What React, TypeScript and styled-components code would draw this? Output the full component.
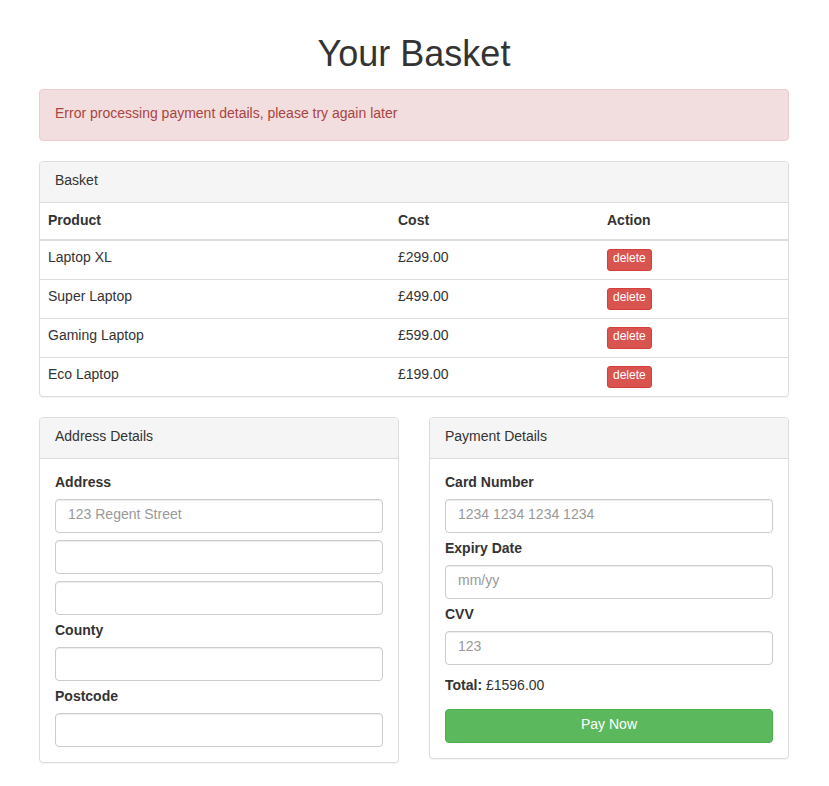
import React from "react";
import styled, { createGlobalStyle } from "styled-components";

const GlobalStyle = createGlobalStyle`
  * { box-sizing: border-box; }
  body {
    margin: 0;
    background: #fff;
    font-family: "Liberation Sans", Helvetica, Arial, sans-serif;
    font-size: 14px;
    line-height: 20px;
    color: #333;
  }
`;

type Item = { name: string; cost: string };

const items: Item[] = [
  { name: "Laptop XL", cost: "£299.00" },
  { name: "Super Laptop", cost: "£499.00" },
  { name: "Gaming Laptop", cost: "£599.00" },
  { name: "Eco Laptop", cost: "£199.00" },
];

const App: React.FC = () => {
  return (
    <>
      <GlobalStyle />
      <Page>
        <Container>
          <Title>Your Basket</Title>
          <Alert>Error processing payment details, please try again later</Alert>

          <Panel>
            <PanelHeading>Basket</PanelHeading>
            <Table>
              <thead>
                <tr>
                  <Th $width={350}>Product</Th>
                  <Th $width={209}>Cost</Th>
                  <Th>Action</Th>
                </tr>
              </thead>
              <tbody>
                {items.map((item) => (
                  <tr key={item.name}>
                    <Td>{item.name}</Td>
                    <Td>{item.cost}</Td>
                    <Td>
                      <DeleteButton>delete</DeleteButton>
                    </Td>
                  </tr>
                ))}
              </tbody>
            </Table>
          </Panel>

          <Columns>
            <Panel>
              <PanelHeading>Address Details</PanelHeading>
              <PanelBody>
                <Label>Address</Label>
                <Input placeholder="123 Regent Street" />
                <Input />
                <Input />
                <Label>County</Label>
                <Input />
                <Label>Postcode</Label>
                <Input $last />
              </PanelBody>
            </Panel>

            <Panel>
              <PanelHeading>Payment Details</PanelHeading>
              <PanelBody>
                <Label>Card Number</Label>
                <Input placeholder="1234 1234 1234 1234" />
                <Label>Expiry Date</Label>
                <Input placeholder="mm/yy" />
                <Label>CVV</Label>
                <Input placeholder="123" />
                <Total>
                  <strong>Total:</strong> £1596.00
                </Total>
                <PayButton>Pay Now</PayButton>
              </PanelBody>
            </Panel>
          </Columns>
        </Container>
      </Page>
    </>
  );
};

const Page = styled.div`
  display: flex;
  justify-content: center;
`;

const Container = styled.div`
  width: 751px;
  padding-right: 1px;
  padding-bottom: 20px;
`;

const Title = styled.h1`
  margin: 34px 0 15px;
  font-size: 36px;
  line-height: 39.6px;
  font-weight: 400;
  text-align: center;
  color: #333;
`;

const Alert = styled.div`
  padding: 13px 15px 17px;
  margin-bottom: 20px;
  border: 1px solid #ebccd1;
  border-radius: 4px;
  background: #f2dede;
  color: #a94442;
`;

const Panel = styled.div`
  margin-bottom: 20px;
  border: 1px solid #ddd;
  border-radius: 4px;
  background: #fff;
  box-shadow: 0 1px 1px rgba(0, 0, 0, 0.05);
  overflow: hidden;
`;

const PanelHeading = styled.div`
  padding: 8px 15px 12px;
  background: #f5f5f5;
  border-bottom: 1px solid #ddd;
  color: #333;
`;

const PanelBody = styled.div`
  padding: 15px;
  display: flex;
  flex-direction: column;
`;

const Table = styled.table`
  width: 100%;
  border-collapse: collapse;
  border-spacing: 0;
`;

const Th = styled.th<{ $width?: number }>`
  width: ${(p) => (p.$width ? `${p.$width}px` : "auto")};
  padding: 7px 8px 9px;
  line-height: 20px;
  text-align: left;
  font-weight: bold;
  vertical-align: bottom;
  border-bottom: 2px solid #ddd;
`;

const Td = styled.td`
  padding: 6px 8px 10px;
  line-height: 20px;
  vertical-align: top;
  border-top: 1px solid #ddd;
`;

const DeleteButton = styled.button`
  display: block;
  margin: 2px 0 -2px;
  padding: 1px 5px 5px;
  font-family: inherit;
  font-size: 12px;
  line-height: 14px;
  color: #fff;
  background: #d9534f;
  border: 1px solid #d43f3a;
  border-radius: 3px;
  cursor: pointer;
`;

const Columns = styled.div`
  display: grid;
  grid-template-columns: 360px 360px;
  column-gap: 30px;
  align-items: start;
`;

const Label = styled.label`
  display: block;
  margin-bottom: 5px;
  padding-bottom: 4px;
  line-height: 16px;
  font-weight: bold;
`;

const Input = styled.input<{ $last?: boolean }>`
  display: block;
  width: 100%;
  height: 34px;
  margin-bottom: ${(p) => (p.$last ? "0" : "7px")};
  padding: 4px 12px 8px;
  font-family: inherit;
  font-size: 14px;
  line-height: 20px;
  color: #555;
  background: #fff;
  border: 1px solid #ccc;
  border-radius: 4px;
  box-shadow: inset 0 1px 1px rgba(0, 0, 0, 0.075);

  &::placeholder {
    color: #999;
  }
`;

const Total = styled.p`
  margin: 3px 0 14px;
  line-height: 20px;
`;

const PayButton = styled.button`
  display: block;
  width: 100%;
  height: 34px;
  padding: 4px 12px 8px;
  font-family: inherit;
  font-size: 14px;
  line-height: 20px;
  color: #fff;
  background: #5cb85c;
  border: 1px solid #4cae4c;
  border-radius: 4px;
  cursor: pointer;
`;

export default App;
